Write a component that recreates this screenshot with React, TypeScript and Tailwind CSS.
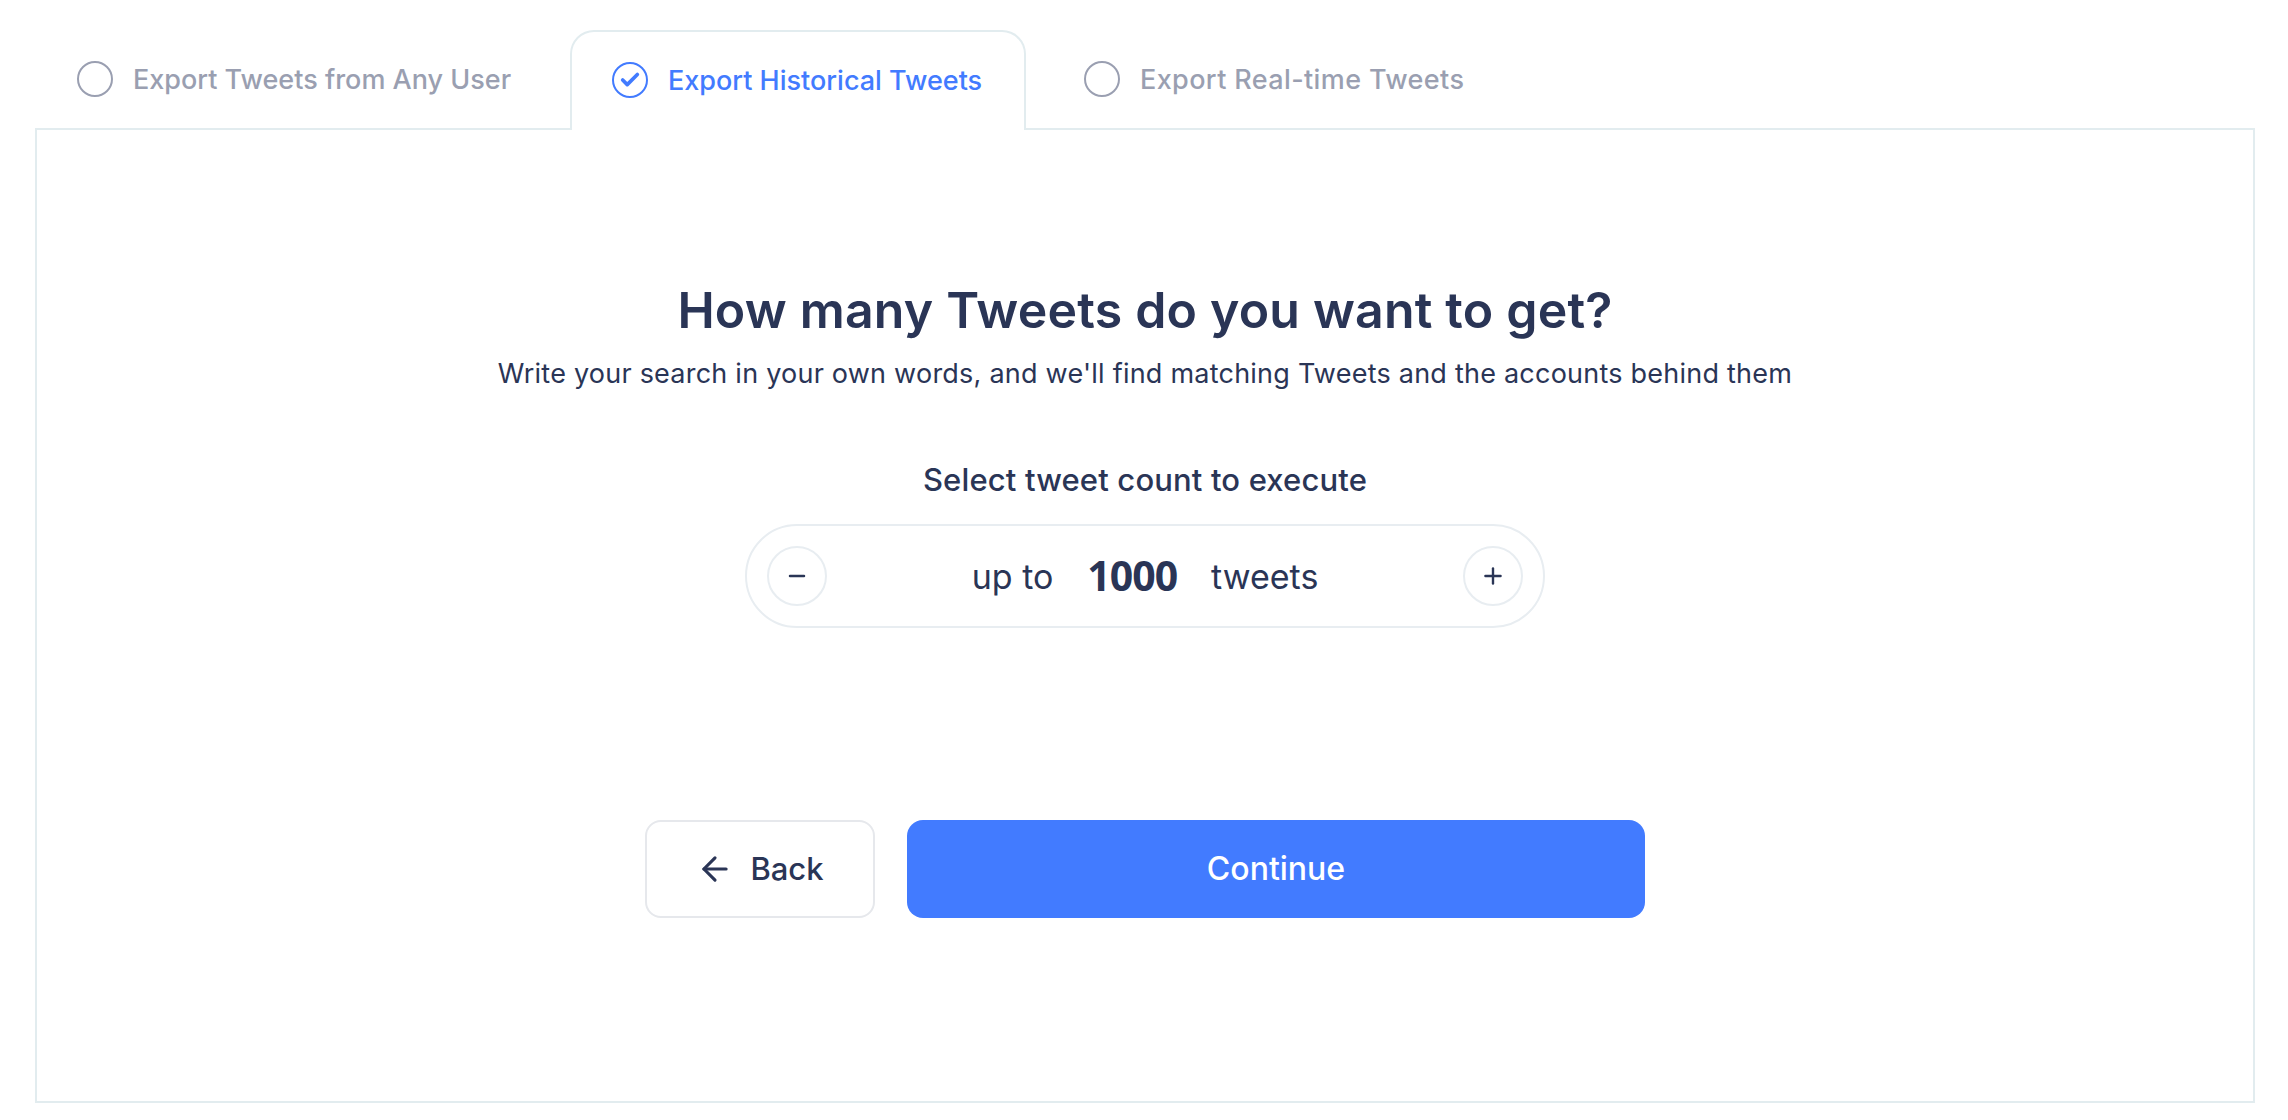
import React from 'react';
import { ArrowLeft, Check, Minus, Plus } from 'lucide-react';

const font = "font-['Inter','Noto_Sans',sans-serif]";

const Tab = ({ label, active, className, labelClass }: { label: string; active?: boolean; className: string; labelClass?: string }) => (
  <div
    className={
      active
        ? `relative z-10 -mb-[2px] flex h-[100px] items-center rounded-t-[24px] border-2 border-b-0 border-[#e2ecef] bg-white pb-[2px] ${className}`
        : `flex h-[98px] items-center ${className}`
    }
  >
    <span
      className={
        active
          ? 'flex h-[36px] w-[36px] shrink-0 items-center justify-center rounded-full border-2 border-[#427bff] text-[#427bff]'
          : 'h-[36px] w-[36px] shrink-0 rounded-full border-2 border-[#9a9fb1]'
      }
    >
      {active && <Check size={22} strokeWidth={4} />}
    </span>
    <span
      className={`mt-[3px] ml-[20px] text-[27px] font-medium whitespace-nowrap ${
        active ? 'text-[#427bff]' : 'text-[#9a9fb1]'
      } ${labelClass ?? ''}`}
    >
      {label}
    </span>
  </div>
);

export default function App() {
  return (
    <div className={`h-[1120px] w-[2288px] overflow-hidden bg-white pt-[30px] ${font}`}>
      <div className="flex pl-[77px]">
        <Tab label="Export Tweets from Any User" className="w-[493px]" />
        <Tab label="Export Historical Tweets" active className="w-[456px] pl-[40px]" />
        <Tab label="Export Real-time Tweets" className="pl-[58px]" labelClass="tracking-[0.38px]" />
      </div>
      <div className="mx-[35px] flex h-[975px] w-[2220px] flex-col items-center border-2 border-[#e2ecef] pt-[150px] text-[#2a3556]">
        <h1 className="text-[50px] leading-[60px] font-semibold tracking-[0.2px]">How many Tweets do you want to get?</h1>
        <p className="mt-[16px] text-[27px] leading-[36px] tracking-[0.23px]">
          Write your search in your own words, and we'll find matching Tweets and the accounts behind them
        </p>
        <p className="mt-[68px] text-[31px] leading-[40px] font-medium tracking-[0.15px]">Select tweet count to execute</p>
        <div className="mt-[24px] flex h-[104px] w-[800px] items-center justify-between rounded-full border-2 border-[#e8edf1] px-[20px]">
          <button className="flex h-[60px] w-[60px] items-center justify-center rounded-full border-2 border-[#e8edf1]">
            <Minus size={24} strokeWidth={2.5} />
          </button>
          <div className="flex items-center text-[34px]">
            <span>up to</span>
            <span className="mx-[34px] font-['Open_Sans',sans-serif] text-[41px] font-bold tracking-[-1px]">1000</span>
            <span>tweets</span>
          </div>
          <button className="flex h-[60px] w-[60px] items-center justify-center rounded-full border-2 border-[#e8edf1]">
            <Plus size={26} strokeWidth={2.2} />
          </button>
        </div>
        <div className="mt-[192px] flex gap-[32px]">
          <button className="flex h-[98px] w-[230px] items-center justify-center gap-[16px] rounded-[16px] border-2 border-[#e6e8ec] text-[31px] font-medium">
            <ArrowLeft size={38} strokeWidth={2} />
            Back
          </button>
          <button className="h-[98px] w-[738px] rounded-[16px] bg-[#427bff] text-[32px] font-medium text-white">
            Continue
          </button>
        </div>
      </div>
    </div>
  );
}
